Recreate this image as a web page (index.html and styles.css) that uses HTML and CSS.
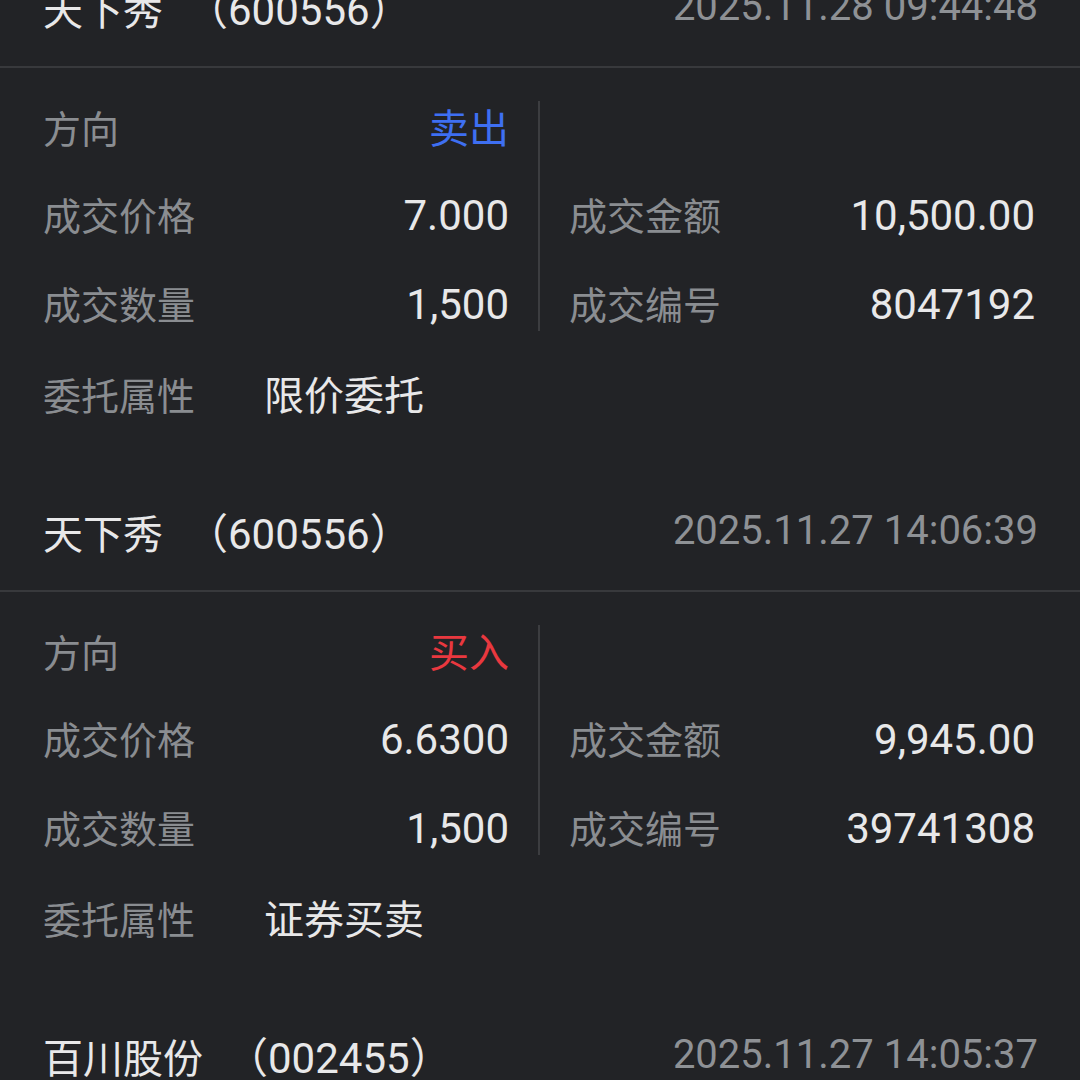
FILE: index.html
```html
<!DOCTYPE html>
<html lang="zh-CN">
<head>
    <meta charset="UTF-8">
    <meta name="viewport" content="width=device-width, initial-scale=1.0">
    <title>成交明细</title>
    <link rel="stylesheet" href="styles.css">
</head>
<body>
    <div class="list">
        <section class="trade">
            <div class="trade-head">
                <span class="name">天下秀<span class="code">（600556）</span></span>
                <span class="time">2025.11.28 09:44:48</span>
            </div>
            <div class="trade-body">
                <div class="pairs">
                    <div class="col">
                        <div class="row"><span class="label">方向</span><span class="value sell">卖出</span></div>
                        <div class="row"><span class="label">成交价格</span><span class="value num">7.000</span></div>
                        <div class="row"><span class="label">成交数量</span><span class="value num">1,500</span></div>
                    </div>
                    <div class="vline"></div>
                    <div class="col">
                        <div class="row"></div>
                        <div class="row"><span class="label">成交金额</span><span class="value num">10,500.00</span></div>
                        <div class="row"><span class="label">成交编号</span><span class="value num">8047192</span></div>
                    </div>
                </div>
                <div class="row attr"><span class="label">委托属性</span><span class="value">限价委托</span></div>
            </div>
        </section>

        <section class="trade">
            <div class="trade-head">
                <span class="name">天下秀<span class="code">（600556）</span></span>
                <span class="time">2025.11.27 14:06:39</span>
            </div>
            <div class="trade-body">
                <div class="pairs">
                    <div class="col">
                        <div class="row"><span class="label">方向</span><span class="value buy">买入</span></div>
                        <div class="row"><span class="label">成交价格</span><span class="value num">6.6300</span></div>
                        <div class="row"><span class="label">成交数量</span><span class="value num">1,500</span></div>
                    </div>
                    <div class="vline"></div>
                    <div class="col">
                        <div class="row"></div>
                        <div class="row"><span class="label">成交金额</span><span class="value num">9,945.00</span></div>
                        <div class="row"><span class="label">成交编号</span><span class="value num">39741308</span></div>
                    </div>
                </div>
                <div class="row attr"><span class="label">委托属性</span><span class="value">证券买卖</span></div>
            </div>
        </section>

        <section class="trade">
            <div class="trade-head">
                <span class="name">百川股份<span class="code">（002455）</span></span>
                <span class="time">2025.11.27 14:05:37</span>
            </div>
        </section>
    </div>
</body>
</html>
```

FILE: styles.css
```css
html, body {
    margin: 0;
    padding: 0;
    height: 100%;
    overflow: hidden;
}
body {
    background-color: #222326;
    font-family: Roboto, "Noto Sans CJK SC", sans-serif;
    color: #e6e6e7;
}
.list {
    margin-top: -54px;
}
.trade-head {
    height: 120px;
    padding: 0 42px 0 43px;
    display: flex;
    align-items: center;
    justify-content: space-between;
    border-bottom: 2px solid #38393c;
}
.name {
    font-size: 40px;
    color: #e8e8e9;
}
.name .code {
    font-size: 42px;
    margin-left: 23px;
}
.time {
    font-size: 40px;
    color: #8e9195;
}
.trade-body {
    padding: 14px 45px 32px 43px;
}
.pairs {
    display: flex;
}
.col {
    flex: 1;
}
.vline {
    width: 2px;
    margin: 19px 29px 18px;
    background: #3c3d40;
}
.row {
    height: 89px;
    box-sizing: border-box;
    padding-top: 15px;
    display: flex;
    align-items: baseline;
    justify-content: space-between;
}
.label {
    font-size: 38px;
    color: #8a8d91;
}
.value {
    font-size: 40px;
    color: #e8e8e9;
}
.value.num {
    font-size: 42px;
}
.sell {
    color: #3e6ff2;
}
.buy {
    color: #e9383f;
}
.attr {
    justify-content: flex-start;
}
.attr .label {
    width: 221px;
}
```
